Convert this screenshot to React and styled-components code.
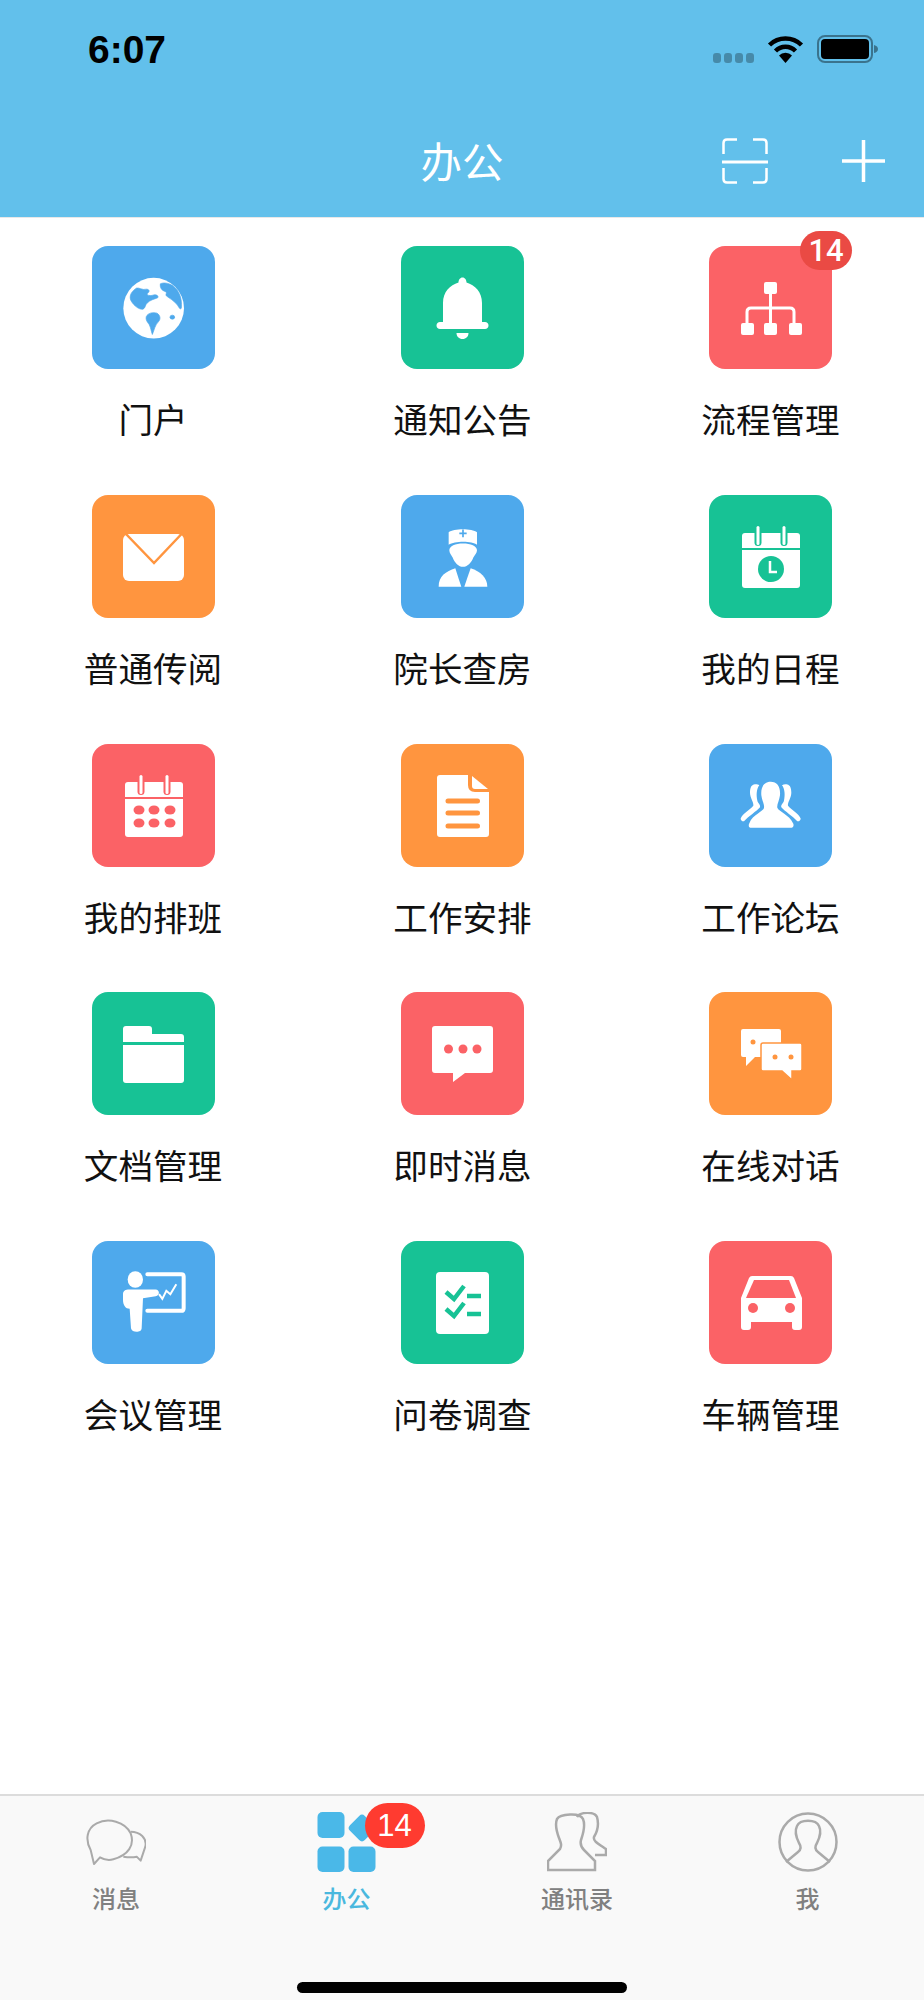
import React from "react";
import styled, { createGlobalStyle } from "styled-components";

const BLUE = "#4ea9ec";
const GREEN = "#17c295";
const RED = "#fb6266";
const ORANGE = "#ff953f";

const CJK = `"Noto Sans CJK SC", "Noto Sans", sans-serif`;

const Global = createGlobalStyle`
  html, body {
    margin: 0;
    padding: 0;
    background: #fff;
  }
`;

const Page = styled.div`
  width: 924px;
  height: 2000px;
  display: flex;
  flex-direction: column;
  overflow: hidden;
  background: #fff;
`;

const Header = styled.header`
  height: 218px;
  box-sizing: border-box;
  background: #62c0eb;
  border-bottom: 1px solid #e8e8e8;
`;

const StatusBar = styled.div`
  height: 98px;
  box-sizing: border-box;
  padding: 0 46px 0 88px;
  display: flex;
  align-items: center;
  justify-content: space-between;
`;

const Time = styled.div`
  font-family: "Liberation Sans", Arial, sans-serif;
  font-weight: 700;
  font-size: 39px;
  line-height: 1;
  color: #000;
`;

const StatusIcons = styled.div`
  display: flex;
  align-items: center;
  gap: 13px;
`;

const NavBar = styled.div`
  margin-top: 18px;
  height: 90px;
  padding-right: 39px;
  display: grid;
  grid-template-columns: 1fr auto 1fr;
  align-items: center;
`;

const NavTitle = styled.div`
  grid-column: 2;
  font-family: ${CJK};
  font-size: 41.5px;
  line-height: 1;
  color: #fff;
  padding-left: 39px;
`;

const NavActions = styled.div`
  grid-column: 3;
  justify-self: end;
  display: flex;
  align-items: center;
  gap: 74px;
`;

const Grid = styled.main`
  flex: 1;
  padding: 28px 0 0 91.5px;
  display: grid;
  grid-template-columns: 309.5px 308px 123px;
  grid-auto-rows: 248.75px;
`;

const Cell = styled.div`
  display: flex;
  flex-direction: column;
  align-items: flex-start;
`;

const Tile = styled.div`
  position: relative;
  width: 123px;
  height: 123px;
  border-radius: 16px;
  background: ${(p) => p.$color};
`;

const TileBadge = styled.span`
  position: absolute;
  top: -15px;
  right: -20px;
  width: 52px;
  height: 39px;
  border-radius: 20px;
  background: #ea4a44;
  color: #fff;
  font-family: Roboto, "Liberation Sans", sans-serif;
  font-weight: 500;
  font-size: 31px;
  line-height: 39px;
  text-align: center;
`;

const Label = styled.div`
  width: 123px;
  margin-top: 24px;
  display: flex;
  justify-content: center;
  font-family: ${CJK};
  font-size: 34.6px;
  line-height: 50px;
  white-space: nowrap;
  color: #111;
`;

const TabBar = styled.nav`
  height: 206px;
  box-sizing: border-box;
  background: #f9f9f9;
  border-top: 2px solid #dcdcdc;
  display: flex;
  flex-direction: column;
`;

const Tabs = styled.div`
  display: grid;
  grid-template-columns: repeat(4, 230.5px);
  padding: 16px 0 0 0.8px;
`;

const Tab = styled.div`
  display: flex;
  flex-direction: column;
  align-items: center;
`;

const TabIcon = styled.div`
  position: relative;
  width: 60px;
  height: 60px;
`;

const TabBadge = styled.span`
  position: absolute;
  top: -9px;
  left: 48px;
  width: 60px;
  height: 45px;
  border-radius: 23px;
  background: #ff3b30;
  color: #fff;
  font-family: "Liberation Sans", Arial, sans-serif;
  font-size: 31px;
  line-height: 45px;
  text-align: center;
`;

const TabLabel = styled.div`
  margin-top: 8px;
  font-family: ${CJK};
  font-size: 24px;
  font-weight: 500;
  line-height: 36px;
  color: ${(p) => (p.$active ? "#4ab8de" : "#808080")};
`;

const HomeBar = styled.div`
  width: 330px;
  height: 11px;
  margin: 66px auto 0;
  border-radius: 6px;
  background: #000;
`;

const Svg = styled.svg`
  display: block;
  width: 100%;
  height: 100%;
`;

function TileSvg({ children }) {
  return <Svg viewBox="0 0 123 123">{children}</Svg>;
}

function Zoomed({ children }) {
  return <g transform="translate(21 20.5) scale(.3333)">{children}</g>;
}

function Ring({ x, color }) {
  return (
    <>
      <rect x={x - 3.5} y={30} width={7} height={21} rx={3.5} fill={color} />
      <rect x={x - 1.5} y={31} width={3} height={19} rx={1.5} fill="#fff" />
    </>
  );
}

function GlobeIcon({ color }) {
  return (
    <TileSvg>
      <Zoomed>
        <circle cx="122" cy="125" r="91" fill="#fff" />
        <g fill={color} stroke={color} strokeWidth="2">
          <path d="M70 65C78 62 88 72 100 68C108 68 112 74 104 80C98 84 108 90 120 86C130 83 138 88 134 94C124 98 112 100 102 110C96 116 98 124 90 128C78 130 64 118 56 106C48 94 50 78 70 65Z" />
          <path d="M142 52C150 48 165 48 180 58C198 72 208 95 205 125C200 132 198 120 190 112C180 100 168 95 160 88C156 82 166 78 154 74C146 72 140 62 142 52Z" />
          <ellipse cx="178" cy="152" rx="7" ry="6" />
          <path d="M100 150C104 140 120 136 132 140C142 146 144 158 136 166C126 176 124 190 118 204C114 192 112 175 104 168C100 162 98 156 100 150Z" />
        </g>
      </Zoomed>
    </TileSvg>
  );
}

function BellIcon() {
  return (
    <TileSvg>
      <path
        fill="#fff"
        d="M42 76V57C42 46 49 39 57.5 36.5C57.5 34 59 31.5 61.5 31.5C64 31.5 65.5 34 65.5 36.5C74 39 81 46 81 57V76H84C86 76 87.5 77.5 87.5 79.5C87.5 81.5 86 83 84 83H39C37 83 35.5 81.5 35.5 79.5C35.5 77.5 37 76 39 76Z"
      />
      <path fill="#fff" d="M55.5 87H67.5C67.5 90.5 65 93 61.5 93C58 93 55.5 90.5 55.5 87Z" />
    </TileSvg>
  );
}

function TreeIcon() {
  return (
    <TileSvg>
      <path
        d="M61.5 45V80M38 80V66Q38 62 42 62H81Q85 62 85 66V80"
        fill="none"
        stroke="#fff"
        strokeWidth="3"
      />
      <g fill="#fff">
        <rect x="55" y="36" width="13" height="12" rx="2" />
        <rect x="32" y="77" width="13" height="12" rx="2" />
        <rect x="55" y="77" width="13" height="12" rx="2" />
        <rect x="80" y="77" width="13" height="12" rx="2" />
      </g>
    </TileSvg>
  );
}

function MailIcon({ color }) {
  return (
    <TileSvg>
      <rect x="31" y="39" width="61" height="47" rx="6" fill="#fff" />
      <path d="M33.5 38.5L62 68L90 38.5" fill="none" stroke={color} strokeWidth="2.5" />
    </TileSvg>
  );
}

function NurseIcon({ color }) {
  return (
    <TileSvg>
      <Zoomed>
        <path fill="#fff" d="M80 50C95 38 150 38 165 50V88C150 76 98 76 80 88Z" />
        <path d="M123 42V65M112 53.5H134" stroke={color} strokeWidth="5" fill="none" />
        <path fill="#fff" d="M82 104C82 92 100 84 123 84C146 84 165 92 165 104C165 112 158 118 154 126C148 142 136 154 123 154C110 154 98 142 92 126C88 118 82 112 82 104Z" />
        <path fill="#fff" d="M100 158C72 168 50 180 50 214H118L110 190Z" />
        <path fill="#fff" d="M146 158C175 168 196 185 196 214H127L135 190Z" />
      </Zoomed>
    </TileSvg>
  );
}

function CalendarBody({ color }) {
  return (
    <>
      <path fill="#fff" d="M33 53V41Q33 38 36 38H88Q91 38 91 41V53Z" />
      <path fill="#fff" d="M33 55H91V90Q91 93 88 93H36Q33 93 33 90Z" />
      <Ring x={49} color={color} />
      <Ring x={75} color={color} />
    </>
  );
}

function ClockCalendarIcon({ color }) {
  return (
    <TileSvg>
      <CalendarBody color={color} />
      <circle cx="62" cy="74" r="13" fill={color} />
      <path d="M61 66V77H68" fill="none" stroke="#fff" strokeWidth="2.5" />
    </TileSvg>
  );
}

function DotsCalendarIcon({ color }) {
  return (
    <TileSvg>
      <CalendarBody color={color} />
      <g fill={color}>
        {[47, 62, 78].map((x) =>
          [66, 79].map((y) => <ellipse key={x + "-" + y} cx={x} cy={y} rx="5.5" ry="4.5" />)
        )}
      </g>
    </TileSvg>
  );
}

function DocIcon({ color }) {
  return (
    <TileSvg>
      <path fill="#fff" d="M39 31H67V41Q67 48 74 48H88V90Q88 93 85 93H39Q36 93 36 90V34Q36 31 39 31Z" />
      <path fill="#fff" d="M71 32L87 45H74Q71 45 71 42Z" />
      <path d="M47 57H76.5M47 69H76.5M47 82H76.5" stroke={color} strokeWidth="5" strokeLinecap="round" />
    </TileSvg>
  );
}

function ForumIcon() {
  return (
    <TileSvg>
      <Zoomed>
        <g fill="#fff">
          <path d="M122 52C142 52 152 68 150 92C148 108 140 120 142 130C146 142 178 150 190 178C192 184 190 190 180 190H65C55 190 55 182 58 176C68 150 100 142 102 130C104 120 96 108 94 92C92 68 102 52 122 52Z" />
          <path d="M72 60C78 58 84 60 88 62C80 72 78 90 82 108C84 118 92 120 90 128C80 140 55 155 42 170C38 172 32 168 32 162C38 148 58 138 70 124C72 114 60 100 60 85C60 70 64 62 72 60Z" />
          <path d="M172 60C166 58 160 60 156 62C164 72 166 90 162 108C160 118 152 120 154 128C164 140 189 155 202 170C206 172 212 168 212 162C206 148 186 138 174 124C172 114 184 100 184 85C184 70 180 62 172 60Z" />
        </g>
      </Zoomed>
    </TileSvg>
  );
}

function FolderIcon() {
  return (
    <TileSvg>
      <path fill="#fff" d="M31 50V37Q31 34 34 34H57Q60 34 60 37V42H89Q92 42 92 45V50Z" />
      <path fill="#fff" d="M31 53H92V88Q92 91 89 91H34Q31 91 31 88Z" />
    </TileSvg>
  );
}

function ChatIcon({ color }) {
  return (
    <TileSvg>
      <path fill="#fff" d="M34 34H89Q92 34 92 37V78Q92 81 89 81H64L52 90V81H34Q31 81 31 78V37Q31 34 34 34Z" />
      <g fill={color}>
        <circle cx="47.5" cy="57" r="4.5" />
        <circle cx="62" cy="57" r="4.5" />
        <circle cx="76" cy="57" r="4.5" />
      </g>
    </TileSvg>
  );
}

function DialogIcon({ color }) {
  return (
    <TileSvg>
      <path fill="#fff" d="M34 37H70Q72 37 72 39V63Q72 65 70 65H46L37 74V65H34Q32 65 32 63V39Q32 37 34 37Z" />
      <circle cx="44" cy="50" r="2.5" fill={color} />
      <path
        fill="#fff"
        stroke={color}
        strokeWidth="1.5"
        d="M54 51H91Q93 51 93 53V77Q93 79 91 79H83V88L73 79H54Q52 79 52 77V53Q52 51 54 51Z"
      />
      <circle cx="66" cy="65" r="2.5" fill={color} />
      <circle cx="82" cy="65" r="2.5" fill={color} />
    </TileSvg>
  );
}

function TeacherIcon() {
  return (
    <TileSvg>
      <Zoomed>
        <ellipse cx="67" cy="54" rx="23" ry="25" fill="#fff" />
        <path fill="#fff" d="M48 84H128C140 84 142 102 128 104L90 110L86 200C86 214 56 214 54 200L50 142C38 142 30 132 30 115V98C30 88 38 84 48 84Z" />
        <path d="M103 38H205Q212 38 212 45V140Q212 148 205 148H103" fill="none" stroke="#fff" strokeWidth="12" strokeLinecap="round" />
        <path d="M138 98L148 112L160 88L172 98L190 68" fill="none" stroke="#fff" strokeWidth="6" />
      </Zoomed>
    </TileSvg>
  );
}

function SurveyIcon({ color }) {
  return (
    <TileSvg>
      <rect x="35" y="31" width="53" height="62" rx="4" fill="#fff" />
      <g fill="none" stroke={color} strokeWidth="4.5">
        <path d="M45 51L53 58L63 45" />
        <path d="M45 68L53 75L63 62" />
        <path d="M66 55H80M66 73H80" />
      </g>
    </TileSvg>
  );
}

function CarIcon({ color }) {
  return (
    <TileSvg>
      <path fill="#fff" d="M43 35H82Q84 35 85 37L93 57V86Q93 89 90 89H86Q83 89 83 86V81H42V86Q42 89 39 89H35Q32 89 32 86V57L40 37Q41 35 43 35Z" />
      <path fill={color} d="M45 39H80L87 57H37Z" />
      <circle cx="44" cy="67" r="5" fill={color} />
      <circle cx="81" cy="67" r="5" fill={color} />
    </TileSvg>
  );
}

const ITEMS = [
  { title: "门户", color: BLUE, Icon: GlobeIcon },
  { title: "通知公告", color: GREEN, Icon: BellIcon },
  { title: "流程管理", color: RED, Icon: TreeIcon, badge: 14 },
  { title: "普通传阅", color: ORANGE, Icon: MailIcon },
  { title: "院长查房", color: BLUE, Icon: NurseIcon },
  { title: "我的日程", color: GREEN, Icon: ClockCalendarIcon },
  { title: "我的排班", color: RED, Icon: DotsCalendarIcon },
  { title: "工作安排", color: ORANGE, Icon: DocIcon },
  { title: "工作论坛", color: BLUE, Icon: ForumIcon },
  { title: "文档管理", color: GREEN, Icon: FolderIcon },
  { title: "即时消息", color: RED, Icon: ChatIcon },
  { title: "在线对话", color: ORANGE, Icon: DialogIcon },
  { title: "会议管理", color: BLUE, Icon: TeacherIcon },
  { title: "问卷调查", color: GREEN, Icon: SurveyIcon },
  { title: "车辆管理", color: RED, Icon: CarIcon },
];

function StatusIconsRow() {
  return (
    <StatusIcons>
      <svg width="41" height="28" viewBox="0 0 41 28">
        {[0, 11, 22, 33].map((x) => (
          <rect key={x} x={x} y={18} width={8} height={10} rx={3} fill="rgba(0,0,0,.28)" />
        ))}
      </svg>
      <svg width="37" height="28" viewBox="0 0 37 28">
        <path d="M2.5 10A23 23 0 0 1 34.5 10M8.5 16A14 14 0 0 1 28.5 16" fill="none" stroke="#000" strokeWidth="4.5" />
        <path d="M18.5 28L12 20.5A9 9 0 0 1 25 20.5Z" fill="#000" />
      </svg>
      <svg width="61" height="28" viewBox="0 0 61 28">
        <rect x="1" y="1" width="54" height="26" rx="7" fill="none" stroke="rgba(0,0,0,.4)" strokeWidth="2" />
        <rect x="4" y="4" width="48" height="20" rx="4" fill="#000" />
        <path d="M57 10Q61 11 61 14Q61 17 57 18Z" fill="rgba(0,0,0,.4)" />
      </svg>
    </StatusIcons>
  );
}

function ScanIcon() {
  return (
    <svg width="46" height="46" viewBox="0 0 46 46" fill="none" stroke="#fff" strokeWidth="2.5">
      <path d="M1.5 16V5Q1.5 1.5 5 1.5H15M31 1.5H41Q44.5 1.5 44.5 5V16" />
      <path d="M1.5 30V41Q1.5 44.5 5 44.5H15M31 44.5H41Q44.5 44.5 44.5 41V30" />
      <path d="M0 24H46" strokeWidth="3" />
    </svg>
  );
}

function PlusIcon() {
  return (
    <svg width="43" height="42" viewBox="0 0 43 42" stroke="#fff" strokeWidth="3.5">
      <path d="M21.5 0V42M0 21H43" />
    </svg>
  );
}

function MessagesTabIcon() {
  return (
    <Svg viewBox="0 0 60 60">
      <g transform="translate(-16 -12) scale(.3333)" fill="none" stroke="#aaa" strokeWidth="6" strokeLinejoin="round">
        <path d="M72 192L62 150C45 120 50 85 80 70C115 52 165 65 182 100C195 135 175 165 130 178C115 182 100 178 90 172Z" />
        <path d="M182 95C210 95 232 115 226 140L212 182L200 170C190 172 175 172 160 170" />
      </g>
    </Svg>
  );
}

function OfficeTabIcon() {
  return (
    <Svg viewBox="0 0 60 60" fill="#4ab8e8">
      <rect x="0.5" y="0" width="27" height="26" rx="5" />
      <rect x="0.5" y="34.5" width="27" height="25.5" rx="5" />
      <rect x="31.5" y="34.5" width="27" height="25.5" rx="5" />
      <rect x="34.5" y="5.5" width="21" height="21" rx="4" transform="rotate(45 45 16)" />
    </Svg>
  );
}

function ContactsTabIcon() {
  return (
    <Svg viewBox="0 0 60 60" fill="none" stroke="#aaa" strokeWidth="2.5">
      <path d="M1 58V49L13 37C15 33 14 31 12 26C9 18 8 12 10 7C13 2 33 0 36 7C39 14 36 22 34 28C33 32 34 35 37 38L48 49V58Z" />
      <path d="M30 5C33 0 47 -1 50 5C52 12 50 20 47 25C46 29 50 31 59 37V43H48" />
    </Svg>
  );
}

function MeTabIcon() {
  return (
    <Svg viewBox="0 0 60 60" fill="none" stroke="#aaa" strokeWidth="2.5">
      <circle cx="30" cy="30" r="28.5" />
      <path d="M8 50L20 40C24 37 23 34 21 31C18 25 17 18 19 14C22 7 38 7 41 14C43 18 42 25 39 31C37 34 36 37 40 40L52 50" />
    </Svg>
  );
}

const TABS = [
  { title: "消息", Icon: MessagesTabIcon },
  { title: "办公", Icon: OfficeTabIcon, active: true, badge: 14 },
  { title: "通讯录", Icon: ContactsTabIcon },
  { title: "我", Icon: MeTabIcon },
];

export default function App() {
  return (
    <Page>
      <Global />
      <Header>
        <StatusBar>
          <Time>6:07</Time>
          <StatusIconsRow />
        </StatusBar>
        <NavBar>
          <NavTitle>办公</NavTitle>
          <NavActions>
            <ScanIcon />
            <PlusIcon />
          </NavActions>
        </NavBar>
      </Header>
      <Grid>
        {ITEMS.map(({ title, color, Icon, badge }) => (
          <Cell key={title}>
            <Tile $color={color}>
              <Icon color={color} />
              {badge && <TileBadge>{badge}</TileBadge>}
            </Tile>
            <Label>{title}</Label>
          </Cell>
        ))}
      </Grid>
      <TabBar>
        <Tabs>
          {TABS.map(({ title, Icon, active, badge }) => (
            <Tab key={title}>
              <TabIcon>
                <Icon />
                {badge && <TabBadge>{badge}</TabBadge>}
              </TabIcon>
              <TabLabel $active={active}>{title}</TabLabel>
            </Tab>
          ))}
        </Tabs>
        <HomeBar />
      </TabBar>
    </Page>
  );
}
